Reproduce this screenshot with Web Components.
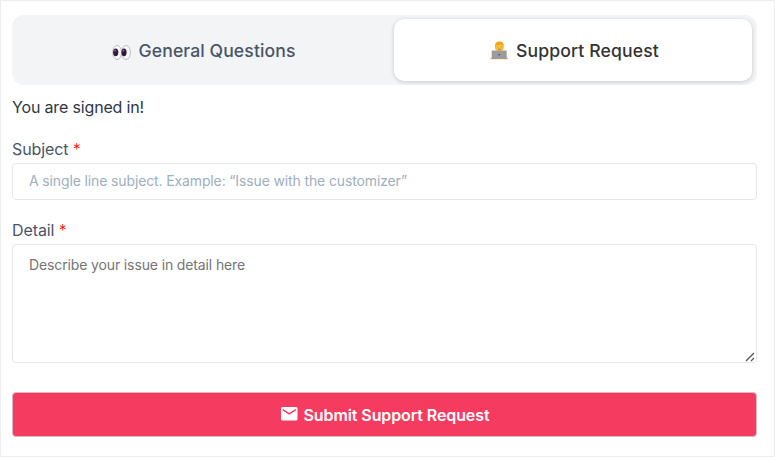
<!DOCTYPE html>
<html lang="en">
<head>
<meta charset="utf-8">
<title>Support Request</title>
<style>
  html, body {
    height: 100%;
  }
  body {
    margin: 0;
    background: #fff;
    color: #2d3748;
    font-family: Inter, "Liberation Sans", sans-serif;
  }
</style>
</head>
<body>
<support-panel>
  <tab-bar>
    <tab-item>
      <svg slot="icon" width="20" height="18" viewBox="-1 -2.5 20 18">
        <ellipse cx="5.1" cy="8" rx="4.400" ry="7.100" fill="#fafafa" stroke="#b9b9b9" stroke-width=".9"/>
        <ellipse cx="14" cy="8" rx="4.400" ry="7.100" fill="#fafafa" stroke="#b9b9b9" stroke-width=".9"/>
        <ellipse cx="3.700" cy="7.800" rx="2.600" ry="3.900" fill="#321b41"/>
        <ellipse cx="12" cy="7.800" rx="2.600" ry="3.900" fill="#321b41"/>
        <circle cx="3.100" cy="6.100" r=".9" fill="#8d7799"/>
        <circle cx="11.400" cy="6.100" r=".9" fill="#8d7799"/>
      </svg>
      General Questions
    </tab-item>
    <tab-item active>
      <svg slot="icon" width="18" height="19" viewBox="-.5 0 18 19">
        <path d="M0 18.200v-.9l2-1.200h14l1.500 1.200v.9z" fill="#fbb03b"/>
        <path d="M4.600 5.200C4.200 2.300 6.300.4 9 .4s4.600 1.900 4.200 4.800L12.700 9H5.200z" fill="#f5a01c"/>
        <ellipse cx="9" cy="6" rx="3.900" ry="4.300" fill="#fdc03a"/>
        <path d="M4.900 4.300C5.500 2.200 7 1.200 9 1.200s3.500 1 4.100 3.100c-1.600 0-2.800-.5-3.600-1.300-1 .9-2.500 1.400-4.600 1.300z" fill="#f5a01c"/>
        <path d="M7.300 5.500v.8M10.700 5.500v.8M7.500 8q1.500.8 3 0" fill="none" stroke="#a56b1b" stroke-width=".7"/>
        <rect x="1.200" y="9.500" width="15" height="8.600" rx=".6" fill="#9b9b9b"/>
        <rect x="7.700" y="13" width="2" height="1.500" fill="#635994"/>
      </svg>
      Support Request
    </tab-item>
  </tab-bar>
  <p>You are signed in!</p>
  <form-field class="subject" label="Subject" placeholder="A single line subject. Example: “Issue with the customizer”"></form-field>
  <form-field class="detail" label="Detail" placeholder="Describe your issue in detail here" multiline></form-field>
  <submit-button>
    <svg slot="icon" width="17" height="15" viewBox="0 0 17 15">
      <rect width="16.500" height="13.600" rx="1.500" fill="#fff"/>
      <path d="M1.700 2.600 8.250 6.800l6.550-4.200" fill="none" stroke="#f63b60" stroke-width="1.500"/>
    </svg>
    Submit Support Request
  </submit-button>
</support-panel>

<script>
class SupportPanel extends HTMLElement {
  constructor() {
    super();
    this.attachShadow({ mode: "open" });
    this.shadowRoot.innerHTML = `
    <style>
    :host {
      display: flex;
      flex-direction: column;
      box-sizing: border-box;
      height: 100%;
      padding: 14px 17px 0 11px;
      border: 1px solid #eee;
    }
    ::slotted(p) {
      margin: 12px 0 0;
      font-size: 16px;
      line-height: 20px;
      letter-spacing: -0.16px;
    }
    ::slotted(.subject) {
      margin-top: 22px;
    }
    ::slotted(.detail) {
      margin-top: 20px;
    }
    ::slotted(submit-button) {
      margin-top: 29px;
    }
    </style>
    <slot></slot>
  `;
  }
}

class TabBar extends HTMLElement {
  constructor() {
    super();
    this.attachShadow({ mode: "open" });
    this.shadowRoot.innerHTML = `
    <style>
    :host {
      display: grid;
      grid-template-columns: 1fr 358px;
      gap: 5px;
      box-sizing: border-box;
      height: 70px;
      padding: 4px 5px;
      border-radius: 12px;
      background: #f3f4f6;
    }
    </style>
    <slot></slot>
  `;
  }
}

class TabItem extends HTMLElement {
  constructor() {
    super();
    this.attachShadow({ mode: "open" });
    this.shadowRoot.innerHTML = `
    <style>
    :host {
      display: flex;
      align-items: center;
      justify-content: center;
      gap: 8px;
      padding-top: 1px;
      border-radius: 10px;
      color: #4a5568;
      font-size: 17.6px;
      font-weight: 500;
      letter-spacing: 0.1px;
    }
    :host([active]) {
      padding-left: 3px;
      background: #fff;
      color: #333;
      letter-spacing: 0.14px;
      box-shadow: 0 1px 4px rgba(0, 0, 0, .18);
    }
    </style>
    <slot name="icon"></slot>
    <span><slot></slot></span>
  `;
  }
}

class FormField extends HTMLElement {
  constructor() {
    super();
    this.attachShadow({ mode: "open" });
    this.render();
  }

  render() {
    const label = this.getAttribute("label") || "";
    const placeholder = this.getAttribute("placeholder") || "";
    const control = this.hasAttribute("multiline")
      ? `<textarea id="control" placeholder="${placeholder}"></textarea>
      <svg class="grip" width="11" height="11" viewBox="0 0 11 11">
        <path d="M1 10 9 2M6 10l3-3" fill="none" stroke="#555" stroke-width="1.300"/>
      </svg>`
      : `<input id="control" type="text" placeholder="${placeholder}">`;

    this.shadowRoot.innerHTML = `
    <style>
    :host {
      display: flex;
      flex-direction: column;
      gap: 4px;
    }
    label {
      color: #4a5568;
      font-size: 16px;
      line-height: 20px;
      letter-spacing: -0.1px;
    }
    .required {
      color: #f00;
      font-weight: 300;
    }
    .control {
      position: relative;
    }
    input, textarea {
      display: block;
      box-sizing: border-box;
      width: 100%;
      margin: 0;
      border: 1px solid #e5e7eb;
      border-radius: 4px;
      background: #fff;
      color: inherit;
      font: 14px/20px Inter, "Liberation Sans", sans-serif;
      letter-spacing: -0.13px;
      outline: none;
    }
    input {
      height: 37px;
      padding: 0 16px 2px;
    }
    textarea {
      height: 119px;
      padding: 10px 16px;
      resize: none;
    }
    .grip {
      position: absolute;
      right: 1px;
      bottom: 1px;
    }
    input::placeholder {
      color: #a0aec0;
    }
    textarea::placeholder {
      color: #757575;
    }
    </style>
    <label for="control">${label} <span class="required">*</span></label>
    <div class="control">${control}</div>
  `;
  }
}

class SubmitButton extends HTMLElement {
  constructor() {
    super();
    this.attachShadow({ mode: "open" });
    this.shadowRoot.innerHTML = `
    <style>
    :host {
      display: block;
    }
    button {
      display: flex;
      align-items: center;
      justify-content: center;
      gap: 6px;
      box-sizing: border-box;
      width: 100%;
      height: 45px;
      margin: 0;
      padding: 0 0 0 1px;
      border: 1px solid #dbb8c2;
      border-radius: 4px;
      background: #f63b60;
      color: #fff;
      font: 600 16px/20px Inter, "Liberation Sans", sans-serif;
      letter-spacing: -0.1px;
    }
    </style>
    <button type="button"><slot name="icon"></slot><span><slot></slot></span></button>
  `;
  }
}

customElements.define("support-panel", SupportPanel);
customElements.define("tab-bar", TabBar);
customElements.define("tab-item", TabItem);
customElements.define("form-field", FormField);
customElements.define("submit-button", SubmitButton);
</script>
</body>
</html>
